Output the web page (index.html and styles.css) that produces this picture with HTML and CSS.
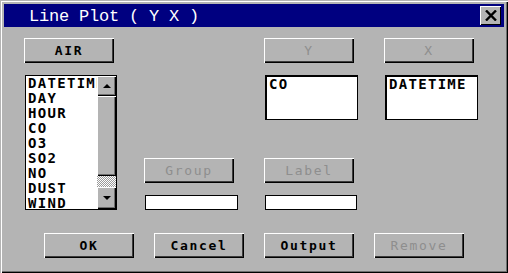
FILE: index.html
```html
<!DOCTYPE html>
<html>
<head>
<meta charset="utf-8">
<title>Line Plot</title>
<link rel="stylesheet" href="styles.css">
</head>
<body>
<div class="win">
  <div class="titlebar">
    <span class="title">Line Plot ( Y X )</span>
    <button class="close" aria-label="Close">
      <svg width="12" height="11" viewBox="0 0 12 11"><path d="M1 0.5 L11 10.5 M11 0.5 L1 10.5" stroke="#000" stroke-width="2.4" fill="none"/></svg>
    </button>
  </div>
  <div class="content">
    <button class="btn c1 r1">AIR</button>
    <button class="btn c3 r1 dis">Y</button>
    <button class="btn c4 r1 dis">X</button>

    <div class="listbox c1">
      <ul class="items">
        <li>DATETIME</li>
        <li>DAY</li>
        <li>HOUR</li>
        <li>CO</li>
        <li>O3</li>
        <li>SO2</li>
        <li>NO</li>
        <li>DUST</li>
        <li>WIND</li>
      </ul>
      <div class="sbar">
        <div class="sbtn"><span class="up"></span></div>
        <div class="thumb"></div>
        <div class="track"></div>
        <div class="sbtn down-btn"><span class="down"></span></div>
      </div>
    </div>

    <div class="box c3 r3">CO</div>
    <div class="box c4 r3">DATETIME</div>

    <button class="btn c2 r5 dis">Group</button>
    <button class="btn c3 r5 dis">Label</button>

    <div class="field c2 r7 w93"></div>
    <div class="field c3 r7 w92"></div>
  </div>
  <div class="actions">
    <button class="btn">OK</button>
    <button class="btn">Cancel</button>
    <button class="btn">Output</button>
    <button class="btn dis">Remove</button>
  </div>
</div>
</body>
</html>
```

FILE: styles.css
```css
html, body {
  margin: 0;
  padding: 0;
  background: #b4b4b4;
}

.win {
  width: 508px;
  height: 273px;
  box-sizing: border-box;
  padding: 4px 4px 0 4px;
  background: #b4b4b4;
  box-shadow:
    inset 1px 1px 0 #b4b4b4,
    inset 2px 2px 0 #ffffff,
    inset -1px -1px 0 #000000,
    inset -2px -2px 0 #6e6e6e;
  font-family: "DejaVu Sans Mono", monospace;
}

.titlebar {
  height: 23px;
  background: #000080;
  display: flex;
  align-items: center;
  justify-content: space-between;
  padding: 0 3px 0 25px;
}

.title {
  color: #ffffff;
  font-family: "Liberation Mono", monospace;
  font-size: 17px;
  letter-spacing: -0.2px;
  line-height: 23px;
  white-space: pre;
  padding-top: 1px;
}

.close {
  width: 21px;
  height: 19px;
  padding: 0;
  margin: 0;
  background: #b4b4b4;
  border: 0;
  box-shadow: inset 1px 1px 0 #ffffff, inset -1px -1px 0 #000000;
  display: flex;
  align-items: center;
  justify-content: center;
}

.close svg {
  display: block;
}

.content {
  margin-top: 11px;
  padding-left: 20px;
  display: grid;
  grid-template-columns: 120px 120px 120px 94px;
  grid-template-rows: 25px 12px 45px 38px 25px 12px 15px;
  justify-items: start;
}

.c1 { grid-column: 1; }
.c2 { grid-column: 2; }
.c3 { grid-column: 3; }
.c4 { grid-column: 4; }
.r1 { grid-row: 1; }
.r3 { grid-row: 3; }
.r5 { grid-row: 5; }
.r7 { grid-row: 7; }

.btn {
  width: 90px;
  height: 25px;
  margin: 0;
  padding: 0;
  background: #b4b4b4;
  border: 0;
  box-shadow:
    inset 1px 1px 0 #ffffff,
    inset -1px -1px 0 #000000,
    inset -2px -2px 0 #3c3c3c;
  font-family: "DejaVu Sans Mono", monospace;
  font-weight: bold;
  font-size: 13px;
  letter-spacing: 1.7px;
  color: #000000;
  text-align: center;
  line-height: 25px;
}

.btn.dis {
  color: #8e8e8e;
  font-weight: normal;
}

.listbox {
  grid-row: 3 / 8;
  margin-left: 1px;
  width: 92px;
  height: 135px;
  box-sizing: border-box;
  border: 1px solid #000000;
  background: #ffffff;
  display: flex;
  overflow: hidden;
}

.items {
  list-style: none;
  margin: 0;
  padding: 0 0 0 2px;
  width: 69px;
  overflow: hidden;
  flex: none;
}

.items li {
  height: 15px;
  line-height: 15px;
  font-weight: bold;
  font-size: 14px;
  letter-spacing: 1.3px;
  color: #000000;
  white-space: nowrap;
}

.sbar {
  flex: 1;
  display: flex;
  flex-direction: column;
  background: #b4b4b4;
}

.sbtn {
  height: 20px;
  flex: none;
  background: #b4b4b4;
  box-shadow: inset 1px 1px 0 #ffffff, inset -1px -1px 0 #000000, inset -2px -2px 0 #6e6e6e;
  display: flex;
  align-items: center;
  justify-content: center;
}

.down-btn {
  height: 22px;
}

.up {
  width: 0;
  height: 0;
  border-left: 4px solid transparent;
  border-right: 4px solid transparent;
  border-bottom: 4px solid #000000;
}

.down {
  width: 0;
  height: 0;
  border-left: 4px solid transparent;
  border-right: 4px solid transparent;
  border-top: 4px solid #000000;
}

.thumb {
  height: 80px;
  flex: none;
  background: #b4b4b4;
  box-shadow: inset 1px 1px 0 #ffffff, inset -1px -1px 0 #000000, inset -2px -2px 0 #6e6e6e;
}

.track {
  flex: 1;
  background: repeating-conic-gradient(#ffffff 0 25%, #9a9a9a 0 50%) 0 0 / 2px 2px;
}

.box {
  margin-left: 1px;
  width: 93px;
  height: 45px;
  box-sizing: border-box;
  border: 1px solid #000000;
  box-shadow: inset 1px 1px 0 #000000;
  background: #ffffff;
  padding: 1px 0 0 3px;
  font-weight: bold;
  font-size: 14px;
  letter-spacing: 1.3px;
  line-height: 15px;
  color: #000000;
}

.field {
  margin-left: 1px;
  height: 15px;
  box-sizing: border-box;
  border: 1px solid #000000;
  background: #ffffff;
}

.w93 { width: 93px; }
.w92 { width: 92px; }

.actions {
  margin-top: 23px;
  padding-left: 40px;
  display: flex;
  gap: 20px;
}
```
